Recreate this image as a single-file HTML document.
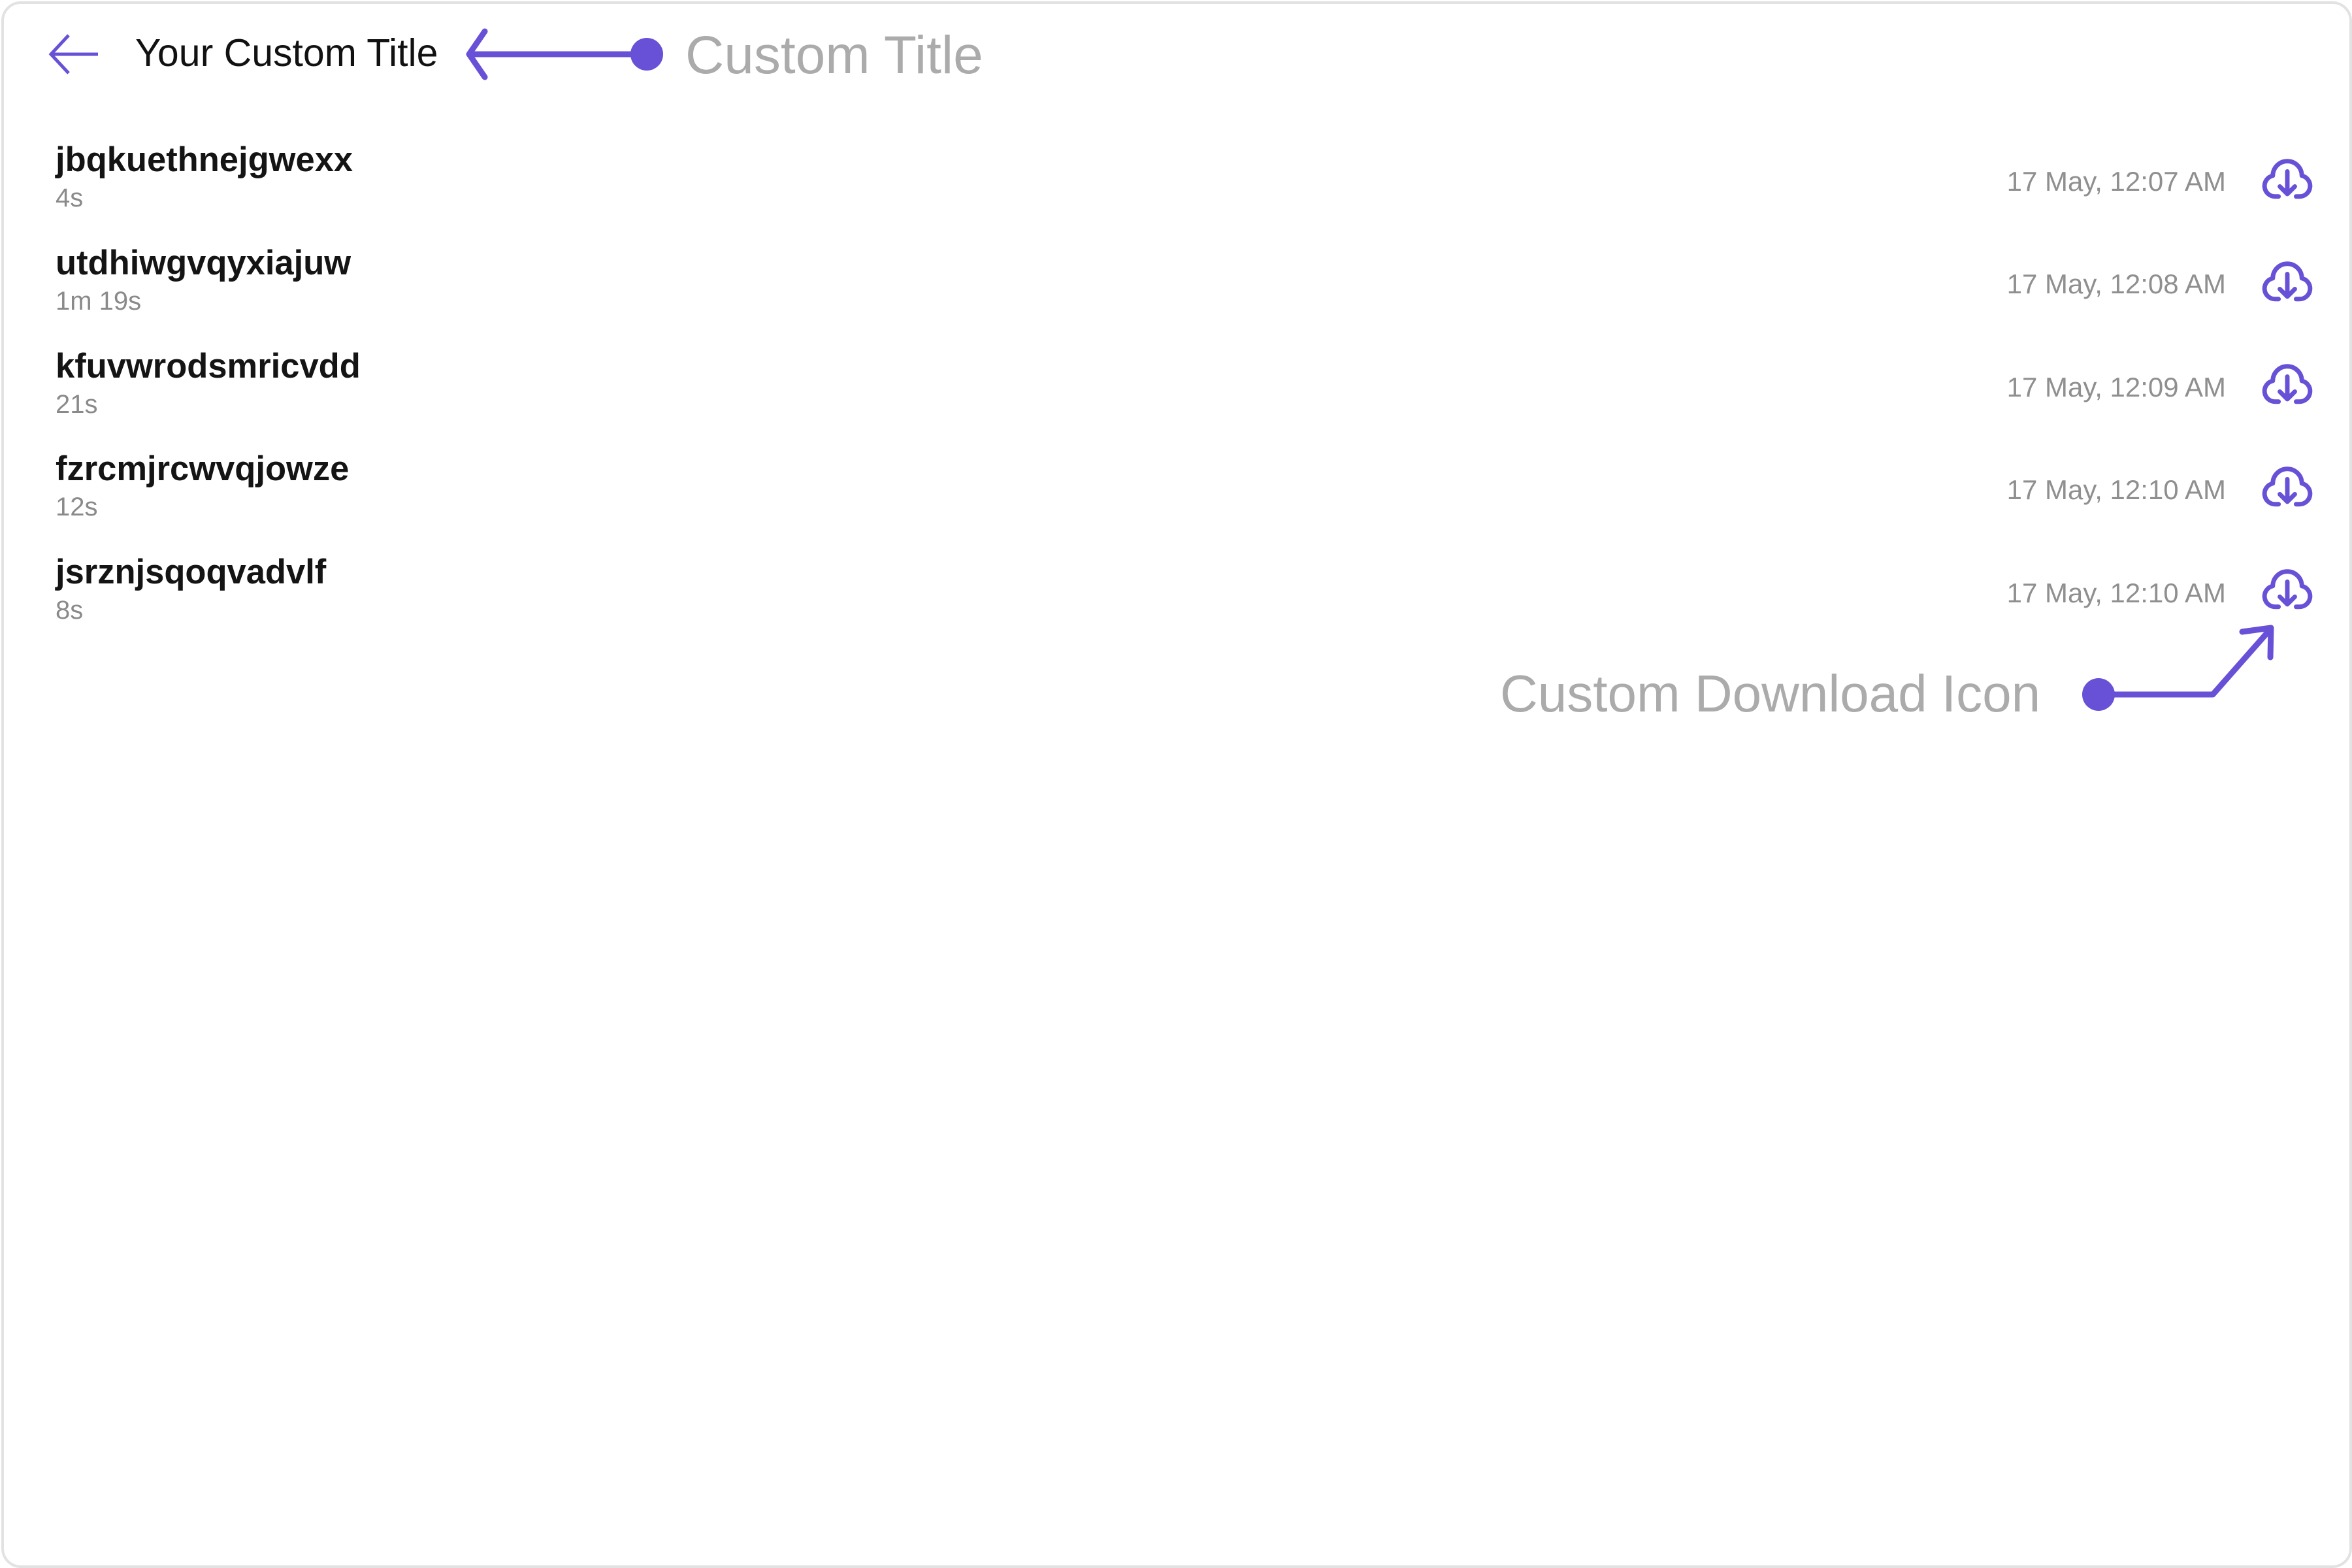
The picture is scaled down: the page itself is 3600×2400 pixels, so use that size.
<!DOCTYPE html>
<html><head><meta charset="utf-8"><style>
html,body{margin:0;padding:0;background:#fff;}
body{width:3600px;height:2400px;position:relative;overflow:hidden;font-family:"Liberation Sans",sans-serif;}
.frame{position:absolute;left:2px;top:2px;width:3590px;height:2390px;border:4px solid #e2e2e2;border-radius:30px;}
.t{position:absolute;white-space:nowrap;line-height:1;}
.name{font-weight:bold;font-size:52.5px;color:#141414;left:85px;}
.sub{font-size:40px;color:#8a8a8a;left:85px;}
.date{font-size:42px;color:#8f8f8f;right:193px;}
.ic{position:absolute;left:3455px;width:92px;height:92px;}
</style></head><body>
<div class="frame"></div>
<svg style="position:absolute;left:70px;top:48px" width="85" height="70" viewBox="0 0 85 70"><path d="M80 35H8M35 6L8 35L35 64" fill="none" stroke="#6851d6" stroke-width="5"/></svg>
<div class="t" style="left:207px;top:52px;font-size:59px;color:#111">Your Custom Title</div>
<svg style="position:absolute;left:700px;top:40px" width="330" height="90" viewBox="0 0 330 90"><path d="M290 43H20M42 8L18 43L42 78" fill="none" stroke="#6851d6" stroke-width="9" stroke-linecap="round" stroke-linejoin="round"/><circle cx="290" cy="43" r="25" fill="#6851d6"/></svg>
<div class="t" style="left:1049px;top:44px;font-size:82px;color:#ababab">Custom Title</div>

<div class="t name" style="top:219px">jbqkuethnejgwexx</div>
<div class="t sub" style="top:283px">4s</div>
<div class="t date" style="top:257px">17 May, 12:07 AM</div>
<svg class="ic" style="top:226px" viewBox="0 0 24 24"><path d="M8.5 19.5H7.2A4.2 4.2 0 0 1 6.2 11.2A5.8 5.8 0 0 1 17.8 11.2A4.2 4.2 0 0 1 16.8 19.5H15.5M12 9.5V18.5M9 15.5L12 18.5L15 15.5" fill="none" stroke="#6851d6" stroke-width="1.8" stroke-linecap="round" stroke-linejoin="round"/></svg>

<div class="t name" style="top:377px">utdhiwgvqyxiajuw</div>
<div class="t sub" style="top:441px">1m 19s</div>
<div class="t date" style="top:414px">17 May, 12:08 AM</div>
<svg class="ic" style="top:383px" viewBox="0 0 24 24"><path d="M8.5 19.5H7.2A4.2 4.2 0 0 1 6.2 11.2A5.8 5.8 0 0 1 17.8 11.2A4.2 4.2 0 0 1 16.8 19.5H15.5M12 9.5V18.5M9 15.5L12 18.5L15 15.5" fill="none" stroke="#6851d6" stroke-width="1.8" stroke-linecap="round" stroke-linejoin="round"/></svg>

<div class="t name" style="top:535px">kfuvwrodsmricvdd</div>
<div class="t sub" style="top:599px">21s</div>
<div class="t date" style="top:572px">17 May, 12:09 AM</div>
<svg class="ic" style="top:540px" viewBox="0 0 24 24"><path d="M8.5 19.5H7.2A4.2 4.2 0 0 1 6.2 11.2A5.8 5.8 0 0 1 17.8 11.2A4.2 4.2 0 0 1 16.8 19.5H15.5M12 9.5V18.5M9 15.5L12 18.5L15 15.5" fill="none" stroke="#6851d6" stroke-width="1.8" stroke-linecap="round" stroke-linejoin="round"/></svg>

<div class="t name" style="top:692px">fzrcmjrcwvqjowze</div>
<div class="t sub" style="top:756px">12s</div>
<div class="t date" style="top:729px">17 May, 12:10 AM</div>
<svg class="ic" style="top:697px" viewBox="0 0 24 24"><path d="M8.5 19.5H7.2A4.2 4.2 0 0 1 6.2 11.2A5.8 5.8 0 0 1 17.8 11.2A4.2 4.2 0 0 1 16.8 19.5H15.5M12 9.5V18.5M9 15.5L12 18.5L15 15.5" fill="none" stroke="#6851d6" stroke-width="1.8" stroke-linecap="round" stroke-linejoin="round"/></svg>

<div class="t name" style="top:850px">jsrznjsqoqvadvlf</div>
<div class="t sub" style="top:914px">8s</div>
<div class="t date" style="top:887px">17 May, 12:10 AM</div>
<svg class="ic" style="top:854px" viewBox="0 0 24 24"><path d="M8.5 19.5H7.2A4.2 4.2 0 0 1 6.2 11.2A5.8 5.8 0 0 1 17.8 11.2A4.2 4.2 0 0 1 16.8 19.5H15.5M12 9.5V18.5M9 15.5L12 18.5L15 15.5" fill="none" stroke="#6851d6" stroke-width="1.8" stroke-linecap="round" stroke-linejoin="round"/></svg>

<div class="t" style="left:2296px;top:1022px;font-size:80px;color:#ababab">Custom Download Icon</div>
<svg style="position:absolute;left:3180px;top:950px" width="320" height="150" viewBox="0 0 320 150"><path d="M32 113H207L296 12M252 17L296 11L295 56" fill="none" stroke="#6851d6" stroke-width="9" stroke-linecap="round" stroke-linejoin="round"/><circle cx="32" cy="113" r="25" fill="#6851d6"/></svg>
</body></html>
